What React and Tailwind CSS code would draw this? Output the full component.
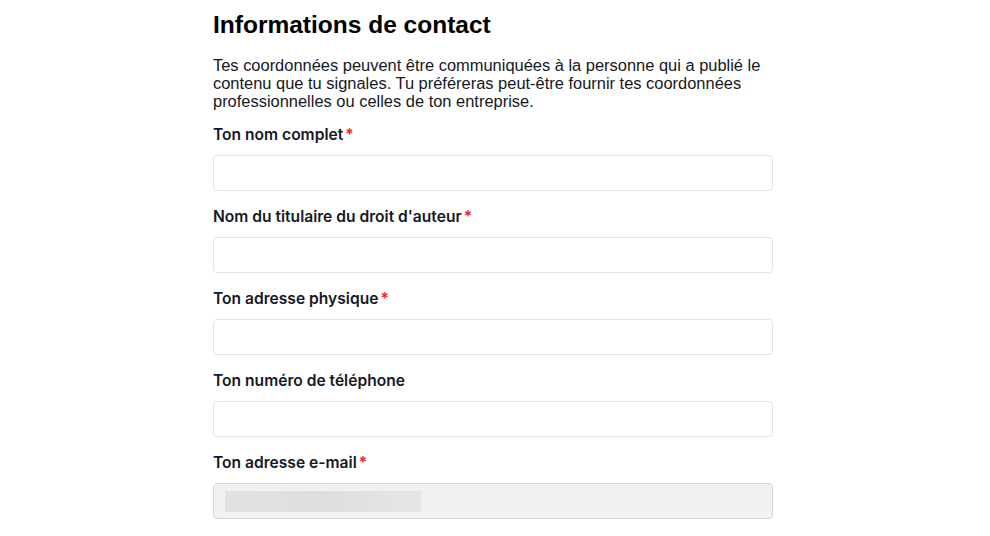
const FIELDS = [
  { label: 'Ton nom complet', required: true },
  { label: "Nom du titulaire du droit d'auteur", required: true },
  { label: 'Ton adresse physique', required: true },
  { label: 'Ton numéro de téléphone', required: false },
];

function Label({ text, required }) {
  return (
    <div className="text-[15.6px] leading-[20px] font-semibold text-[#161823] font-['Inter',sans-serif]">
      {text}
      {required && <span className="text-[#f5222d] ml-[2px]">*</span>}
    </div>
  );
}

export default function App() {
  return (
    <div className="min-h-screen bg-white font-['Liberation_Sans',Arial,sans-serif]">
      <div className="w-[560px] ml-[213px] pt-[9px]">
        <h1 className="text-[24.5px] leading-[32px] font-bold text-black">Informations de contact</h1>
        <p className="mt-[15px] text-[16.45px] leading-[18px] text-[#161823]">
          Tes coordonnées peuvent être communiquées à la personne qui a publié le contenu que tu signales. Tu préféreras peut-être fournir tes coordonnées professionnelles ou celles de ton entreprise.
        </p>
        {FIELDS.map((f, i) => (
          <div key={f.label} className={i === 0 ? 'mt-[15px]' : 'mt-[16px]'}>
            <Label text={f.label} required={f.required} />
            <input
              type="text"
              className="mt-[10px] block w-full h-[36px] rounded-[4px] border border-[#e3e3e4] bg-white px-3 outline-none"
            />
          </div>
        ))}
        <div className="mt-[16px]">
          <Label text="Ton adresse e-mail" required />
          <div className="mt-[10px] h-[36px] rounded-[4px] border border-[#d8d8d8] bg-[#f1f1f1] flex items-center px-[11px]">
            <div className="h-[21px] w-[196px] bg-gradient-to-r from-[#e2e2e4] via-[#dedee0] to-[#e6e6e8]" />
          </div>
        </div>
      </div>
    </div>
  );
}
